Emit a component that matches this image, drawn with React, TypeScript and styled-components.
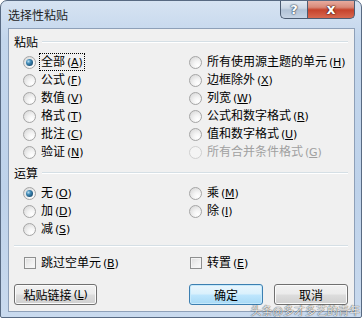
import React from "react";
import styled, { createGlobalStyle } from "styled-components";

const GlobalStyle = createGlobalStyle`
  html, body {
    margin: 0;
    padding: 0;
    background: #ffffff;
  }
  body {
    font-family: "Noto Sans CJK SC", "DejaVu Sans", sans-serif;
    font-size: 12px;
    color: #000;
  }
`;

const pasteLeft = [
  { label: "全部", key: "A", checked: true, focus: true },
  { label: "公式", key: "F" },
  { label: "数值", key: "V" },
  { label: "格式", key: "T" },
  { label: "批注", key: "C" },
  { label: "验证", key: "N" },
];

const pasteRight = [
  { label: "所有使用源主题的单元", key: "H" },
  { label: "边框除外", key: "X" },
  { label: "列宽", key: "W" },
  { label: "公式和数字格式", key: "R" },
  { label: "值和数字格式", key: "U" },
  { label: "所有合并条件格式", key: "G", disabled: true },
];

const opLeft = [
  { label: "无", key: "O", checked: true },
  { label: "加", key: "D" },
  { label: "减", key: "S" },
];

const opRight = [
  { label: "乘", key: "M" },
  { label: "除", key: "I" },
];

type Item = {
  label: string;
  key: string;
  checked?: boolean;
  focus?: boolean;
  disabled?: boolean;
};

const Label = ({ item }: { item: Item }) => (
  <LabelText $disabled={item.disabled} $focus={item.focus}>
    {item.label}
    <Key>
      (<u>{item.key}</u>)
    </Key>
  </LabelText>
);

const RadioRow = ({ item }: { item: Item }) => (
  <Row>
    <Radio $checked={item.checked} $disabled={item.disabled} />
    <Label item={item} />
  </Row>
);

const App = () => {
  return (
    <>
      <GlobalStyle />
      <Window>
        <TitleBar>
          <Title>选择性粘贴</Title>
          <Controls>
            <HelpButton>?</HelpButton>
            <CloseButton>x</CloseButton>
          </Controls>
        </TitleBar>
        <Client>
          <SectionHeader>
            <span>粘贴</span>
            <HeaderLine />
          </SectionHeader>
          <Options>
            <Column>
              {pasteLeft.map((it) => (
                <RadioRow key={it.key} item={it} />
              ))}
            </Column>
            <Column>
              {pasteRight.map((it) => (
                <RadioRow key={it.key} item={it} />
              ))}
            </Column>
          </Options>

          <SectionHeader $gap={5}>
            <span>运算</span>
            <HeaderLine />
          </SectionHeader>
          <Options>
            <Column>
              {opLeft.map((it) => (
                <RadioRow key={it.key} item={it} />
              ))}
            </Column>
            <Column>
              {opRight.map((it) => (
                <RadioRow key={it.key} item={it} />
              ))}
            </Column>
          </Options>

          <Separator />

          <CheckRow>
            <Row>
              <Checkbox />
              <Label item={{ label: "跳过空单元", key: "B" }} />
            </Row>
            <Row>
              <Checkbox />
              <Label item={{ label: "转置", key: "E" }} />
            </Row>
          </CheckRow>

          <ButtonBar>
            <Button $width={83}>
              粘贴链接
              <Key>
                (<u>L</u>)
              </Key>
            </Button>
            <Spacer />
            <Button $width={74} $default>
              确定
            </Button>
            <Button $width={74}>取消</Button>
          </ButtonBar>
        </Client>
        <Watermark>头条@多才多艺的青年</Watermark>
      </Window>
    </>
  );
};

const Window = styled.div`
  position: relative;
  box-sizing: border-box;
  width: 362px;
  height: 318px;
  display: flex;
  flex-direction: column;
  padding: 0 6px 5px 7px;
  border: 1px solid #586a82;
  border-radius: 7px 7px 2px 2px;
  background: linear-gradient(180deg, #d6e3f2 0%, #c3d6ec 12%, #bed2ea 60%, #c9daee 100%);
  overflow: hidden;
`;

const TitleBar = styled.div`
  height: 27px;
  display: flex;
  align-items: flex-start;
  flex-shrink: 0;
`;

const Title = styled.div`
  padding-top: 6px;
  font-size: 12px;
  line-height: 16px;
  color: #1e1e1e;
`;

const Controls = styled.div`
  margin-left: auto;
  margin-top: -1px;
  display: flex;
`;

const CaptionButton = styled.div`
  height: 19px;
  box-sizing: border-box;
  display: flex;
  align-items: center;
  justify-content: center;
  font-family: "DejaVu Sans", sans-serif;
  font-weight: bold;
  color: #fff;
  border: 1px solid #4c5c72;
  border-top: none;
`;

const HelpButton = styled(CaptionButton)`
  width: 27px;
  font-size: 13px;
  border-radius: 0 0 0 5px;
  border-right: none;
  background: linear-gradient(180deg, #e6edf5 0%, #cbd7e5 45%, #b1c2d6 55%, #c6d4e5 100%);
  text-shadow: 0 0 1px #3a4a5e, 0 0 1px #3a4a5e, 0 0 2px #3a4a5e;
`;

const CloseButton = styled(CaptionButton)`
  width: 48px;
  font-size: 14px;
  border-radius: 0 0 5px 0;
  background: linear-gradient(180deg, #eab0a4 0%, #d98a79 40%, #c6432c 55%, #d8684f 100%);
  text-shadow: 0 0 1px #4a1a10, 0 0 1px #4a1a10, 0 0 2px #4a1a10;
`;

const Client = styled.div`
  flex: 1;
  display: flex;
  flex-direction: column;
  padding: 6px 6px 0 5px;
  background: #f0f0f0;
  border: 1px solid #8ea0b8;
`;

const SectionHeader = styled.div<{ $gap?: number }>`
  display: flex;
  align-items: center;
  gap: 4px;
  height: 14px;
  margin-top: ${(p) => p.$gap ?? 0}px;
  line-height: 14px;
`;

const HeaderLine = styled.div`
  flex: 1;
  height: 0;
  border-top: 1px solid #d5dfe5;
  border-bottom: 1px solid #ffffff;
`;

const Options = styled.div`
  display: grid;
  grid-template-columns: 166px 1fr;
  margin: 4px 0 0 9px;
`;

const Column = styled.div`
  display: flex;
  flex-direction: column;
`;

const Row = styled.div`
  display: flex;
  align-items: center;
  gap: 4px;
  height: 18px;
`;

const LabelText = styled.span<{ $disabled?: boolean; $focus?: boolean }>`
  white-space: nowrap;
  line-height: 14px;
  color: ${(p) => (p.$disabled ? "#a0a0a0" : "#000")};
  outline: ${(p) => (p.$focus ? "1px dotted #000" : "none")};
  outline-offset: 0;
  padding: 0 1px;
`;

const Key = styled.span`
  font-family: "DejaVu Sans", sans-serif;
  font-size: 11px;
  margin-left: 2px;
  letter-spacing: -0.2px;
`;

const Radio = styled.span<{ $checked?: boolean; $disabled?: boolean }>`
  position: relative;
  width: 13px;
  height: 13px;
  box-sizing: border-box;
  border-radius: 50%;
  flex-shrink: 0;
  border: 1px solid ${(p) => (p.$disabled ? "#d0d0d0" : "#a5a5a5")};
  background: ${(p) =>
    p.$disabled
      ? "#f4f4f4"
      : "radial-gradient(circle at 70% 75%, #ffffff 0%, #f4f4f4 35%, #d2d2d2 100%)"};
  &::after {
    content: "";
    display: ${(p) => (p.$checked ? "block" : "none")};
    position: absolute;
    left: 2px;
    top: 2px;
    width: 7px;
    height: 7px;
    border-radius: 50%;
    background: radial-gradient(circle at 35% 35%, #b6dcef 0%, #3f88b4 35%, #174a6e 80%, #0f3a58 100%);
  }
`;

const Checkbox = styled.span`
  width: 12px;
  height: 12px;
  box-sizing: border-box;
  flex-shrink: 0;
  border: 1px solid #8e8f8f;
  background: linear-gradient(135deg, #dcdcdc 0%, #eeeeee 50%, #fbfbfb 100%);
  box-shadow: inset 0 0 0 1px #f4f4f4;
  margin-left: 1px;
`;

const Separator = styled.div`
  margin-top: 7px;
  border-top: 1px solid #d5dfe5;
  border-bottom: 1px solid #ffffff;
`;

const CheckRow = styled.div`
  display: grid;
  grid-template-columns: 166px 1fr;
  margin: 7px 0 0 9px;
`;

const ButtonBar = styled.div`
  display: flex;
  gap: 11px;
  margin-top: 12px;
`;

const Spacer = styled.div`
  flex: 1;
`;

const Button = styled.div<{ $width: number; $default?: boolean }>`
  width: ${(p) => p.$width}px;
  height: 21px;
  box-sizing: border-box;
  display: flex;
  align-items: center;
  justify-content: center;
  white-space: nowrap;
  border-radius: 3px;
  border: 1px solid ${(p) => (p.$default ? "#3c7fb1" : "#707070")};
  background: ${(p) =>
    p.$default
      ? "linear-gradient(180deg, #eaf6fd 0%, #d9f0fc 48%, #bee6fd 52%, #a7d9f5 100%)"
      : "linear-gradient(180deg, #f2f2f2 0%, #ebebeb 48%, #dddddd 52%, #cfcfcf 100%)"};
  box-shadow: inset 0 0 0 1px ${(p) => (p.$default ? "#c6e9fb" : "#fbfbfb")};
`;

const Watermark = styled.div`
  position: absolute;
  right: 1px;
  bottom: 1px;
  font-size: 11px;
  line-height: 12px;
  color: rgba(255, 255, 255, 0.9);
  text-shadow: 0 0 1px rgba(0, 0, 0, 0.7), 0 0 1px rgba(0, 0, 0, 0.5);
  white-space: nowrap;
`;

export default App;
